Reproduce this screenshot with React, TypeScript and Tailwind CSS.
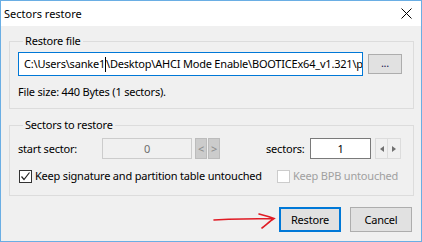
export default function App() {
  const font = { fontFamily: '"Noto Sans", "Liberation Sans", sans-serif' };
  return (
    <div
      className="relative w-[422px] h-[242px] border border-[#6aaee4] bg-[#f0f0f0] text-[11px] leading-[16px] tracking-[-0.2px] text-black flex flex-col whitespace-nowrap"
      style={font}
    >
      {/* title bar */}
      <div className="h-[25px] bg-white flex items-center justify-between pl-[3px] pr-[9px] shrink-0">
        <span className="text-[11px] tracking-[0px]">Sectors restore</span>
        <svg width="11" height="11" viewBox="0 0 11 11" className="block">
          <path d="M0.5 0.5 L10.5 10.5 M10.5 0.5 L0.5 10.5" stroke="#000" strokeWidth="1" />
        </svg>
      </div>

      {/* Restore file group */}
      <fieldset className="mt-[7px] ml-[8px] mr-[7px] border border-[#dcdcdc] pl-[8px] pr-[10px] pt-[3px] pb-[8px]">
        <legend className="ml-[5px] px-[2px] leading-[16px]">Restore file</legend>
        <div className="flex items-center">
          <div className="h-[24px] w-[345px] border border-[#0078d7] bg-white pl-[5px] flex items-center overflow-hidden">
            <span>C:\Users\sanke1</span>
            <span className="inline-block w-px h-[15px] bg-black shrink-0" />
            <span>\Desktop\AHCI Mode Enable\BOOTICEx64_v1.321\pa</span>
          </div>
          <button className="ml-[5px] h-[20px] w-[34px] border border-[#adadad] bg-[#e1e1e1] flex items-center justify-center text-[#1a1a50] leading-none pb-[4px]">
            ...
          </button>
        </div>
        <div className="mt-[8px]">File size: 440 Bytes (1 sectors).</div>
      </fieldset>

      {/* Sectors to restore group */}
      <fieldset className="mt-[8px] ml-[8px] mr-[7px] border border-[#dcdcdc] pl-[8px] pr-[10px] pt-[5px] pb-[11px]">
        <legend className="ml-[5px] px-[2px] leading-[16px]">Sectors to restore</legend>
        <div className="flex items-center h-[21px]">
          <span className="w-[84px]">start sector:</span>
          <div className="h-[21px] w-[90px] border border-[#cccccc] bg-[#f0f0f0] flex items-center justify-center text-[#6d6d6d]">
            0
          </div>
          <div className="ml-[3px] h-[21px] w-[12px] border border-[#bcbcbc] bg-[#cccccc] text-[#8a8a8a] flex items-center justify-center">
            &lt;
          </div>
          <div className="ml-px h-[21px] w-[12px] border border-[#bcbcbc] bg-[#cccccc] text-[#8a8a8a] flex items-center justify-center">
            &gt;
          </div>
          <span className="ml-[46px] w-[44px]">sectors:</span>
          <div className="h-[21px] w-[61px] border border-[#7a7a7a] bg-white flex items-center justify-center">
            1
          </div>
          <div className="ml-[4px] h-[21px] w-[27px] flex">
            <div className="w-[13px] h-full border border-[#dcdcdc] flex items-center justify-center">
              <svg width="4" height="6" viewBox="0 0 4 6">
                <path d="M4 0 L0 3 L4 6 Z" fill="#707070" />
              </svg>
            </div>
            <div className="w-[13px] h-full border border-l-0 border-[#dcdcdc] flex items-center justify-center">
              <svg width="4" height="6" viewBox="0 0 4 6">
                <path d="M0 0 L4 3 L0 6 Z" fill="#707070" />
              </svg>
            </div>
          </div>
        </div>
        <div className="mt-[9px] flex items-center h-[16px]">
          <div className="ml-px w-[13px] h-[13px] border border-[#333333] bg-white flex items-center justify-center">
            <svg width="11" height="11" viewBox="0 0 11 11">
              <path d="M1.5 5.5 L4 8.5 L9.5 1.5" stroke="#222" strokeWidth="1.2" fill="none" />
            </svg>
          </div>
          <span className="ml-[3px] w-[242px]">Keep signature and partition table untouched</span>
          <div className="w-[13px] h-[13px] border border-[#cccccc] bg-white" />
          <span className="ml-[3px] text-[#a0a0a0]">Keep BPB untouched</span>
        </div>
      </fieldset>

      {/* buttons */}
      <div className="mt-[11px] flex justify-end gap-[9px] pr-[9px]">
        <button className="h-[25px] w-[62px] border-2 border-[#0078d7] bg-[#e1e1e1] flex items-center justify-center">
          Restore
        </button>
        <button className="h-[25px] w-[62px] border border-[#adadad] bg-[#e1e1e1] flex items-center justify-center">
          Cancel
        </button>
      </div>

      {/* red hand-drawn arrow annotation */}
      <svg
        className="absolute left-[212px] top-[210px]"
        width="66"
        height="22"
        viewBox="0 0 66 22"
      >
        <path
          d="M1 9 C 20 8, 45 7.5, 61 7.5 M46 3 C 52 4.5, 57 6, 61 7.5 C 57 10, 53 14, 49 17"
          stroke="#e01b24"
          strokeWidth="1.6"
          fill="none"
          strokeLinecap="round"
        />
      </svg>
    </div>
  );
}
